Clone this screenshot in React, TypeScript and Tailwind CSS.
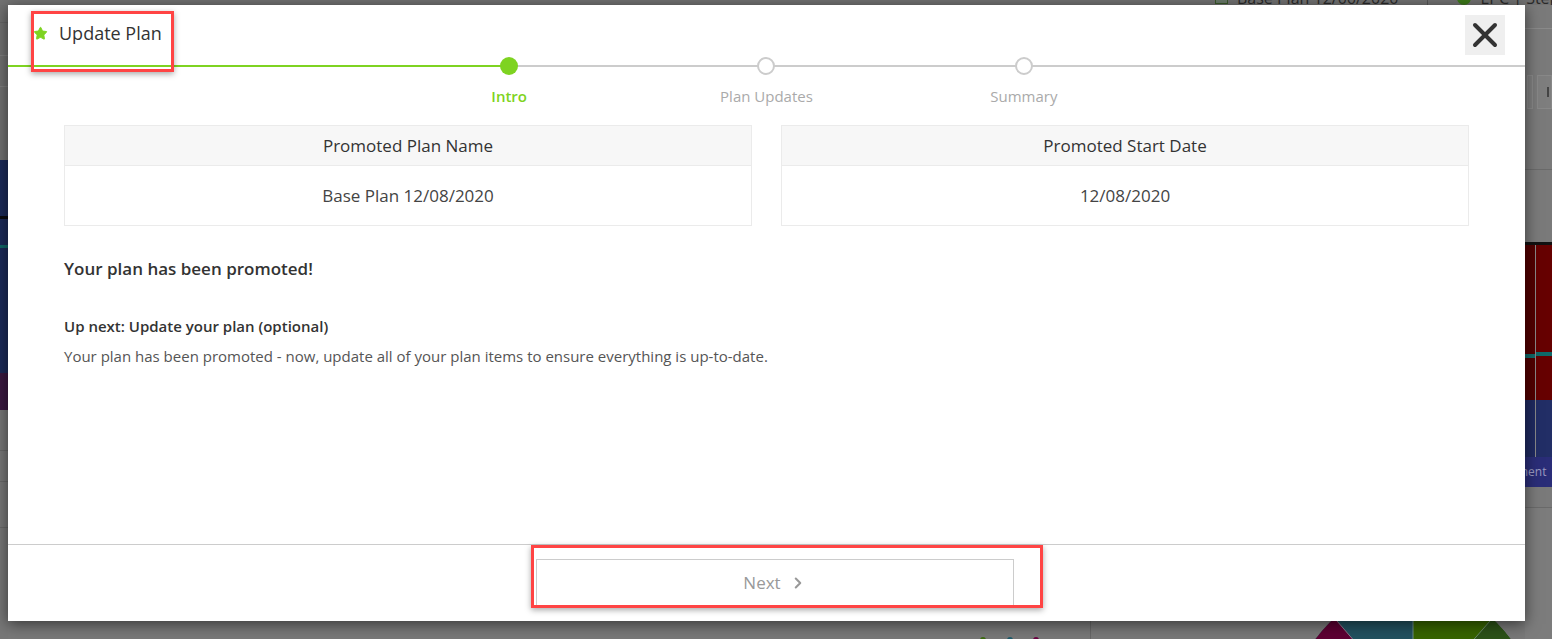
import { Star, ChevronRight } from "lucide-react";

function LeftStrip() {
  return (
    <div className="w-[8px] flex flex-col">
      <div className="h-[155px] bg-[#707070] flex flex-col">
        <div className="h-[17px]" />
        <div className="h-px bg-[#666]" />
        <div className="h-[32px]" />
        <div className="h-px bg-[#7e7e7e]" />
        <div className="h-[30px]" />
        <div className="h-px bg-[#7e7e7e]" />
      </div>
      <div className="h-[56px] bg-[#1b2a58]" />
      <div className="h-[3px] bg-[#0c0c10]" />
      <div className="h-[26px] bg-[#1b2a58]" />
      <div className="h-[3px] bg-[#0f6767]" />
      <div className="h-[125px] bg-[#1b2a58]" />
      <div className="h-[37px] bg-[#3a1840]" />
      <div className="flex-1 bg-[#777] flex flex-col">
        <div className="h-[40px]" />
        <div className="h-px bg-[#686868]" />
        <div className="h-[30px]" />
        <div className="h-px bg-[#686868]" />
        <div className="h-[45px]" />
        <div className="h-px bg-[#686868]" />
      </div>
    </div>
  );
}

function RightStrip() {
  return (
    <div className="w-[27px] flex flex-col">
      <div className="h-[23px] bg-[#7a7a7a]" />
      <div className="h-px bg-[#8a8a8a]" />
      <div className="h-[46px] bg-[#7a7a7a]" />
      <div className="h-[34px] bg-[#7a7a7a] flex gap-[4px] pl-[2px]">
        <div className="w-[6px] border border-[#888] bg-[#7e7e7e]" />
        <div className="flex-1 border border-[#888] bg-[#7e7e7e] flex items-center pl-[9px]">
          <div className="w-[2px] h-[10px] bg-[#444]" />
        </div>
      </div>
      <div className="h-[60px] bg-[#7a7a7a]" />
      <div className="h-px bg-[#6a6a6a]" />
      <div className="h-[72px] bg-[#7a7a7a]" />
      <div className="h-[3px] bg-[#111]" />
      <div className="h-[155px] flex">
        <div className="w-[10px] flex flex-col bg-[#520000]">
          <div className="h-[109px]" />
          <div className="h-[4px] bg-[#0f6a6a]" />
        </div>
        <div className="w-px bg-[#888]" />
        <div className="flex-1 flex flex-col bg-[#660000]">
          <div className="h-[107px]" />
          <div className="h-[4px] bg-[#0f6a6a]" />
        </div>
      </div>
      <div className="h-[57px] flex">
        <div className="w-[10px] bg-[#1f2a60]" />
        <div className="w-px bg-[#888]" />
        <div className="flex-1 bg-[#222e66]" />
      </div>
      <div className="h-[30px] bg-[#2a2d78] overflow-hidden flex items-center">
        <span className="text-[12px] text-[#9a9ac0] -ml-[8px] whitespace-nowrap">ment</span>
      </div>
      <div className="h-[20px] bg-[#7a7a7a]" />
      <div className="h-px bg-[#6a6a6a]" />
      <div className="flex-1 bg-[#7c7c7c]" />
    </div>
  );
}

function BottomStrip() {
  return (
    <div className="h-[18px] bg-[#787878] overflow-hidden">
      <svg width="1517" height="18" viewBox="0 0 1517 18">
        <defs>
          <clipPath id="pie">
            <circle cx="1405" cy="88" r="120" />
          </clipPath>
        </defs>
        <line x1="1082.5" y1="0" x2="1082.5" y2="18" stroke="#666" strokeWidth="1" />
        <circle cx="975" cy="19" r="3" fill="#3d6a10" />
        <circle cx="1002" cy="19" r="3" fill="#1d5a6a" />
        <circle cx="1028" cy="19" r="3" fill="#6a0040" />
        <g clipPath="url(#pie)">
          <rect x="1200" y="-40" width="400" height="200" fill="#22515f" />
          <polygon points="1405,88 1405,-200 1700,-200 1700,88" fill="#376400" />
          <polygon points="1405,88 1636,-176 1700,-176 1700,88" fill="#2c5218" />
          <polygon points="1405,88 1177,-176 1100,-176 1100,88" fill="#5e0033" />
          <line x1="1405" y1="88" x2="1405" y2="-40" stroke="#6a8a8a" strokeWidth="1" />
          <line x1="1405" y1="88" x2="1636" y2="-176" stroke="#6a8a6a" strokeWidth="1" />
          <line x1="1405" y1="88" x2="1177" y2="-176" stroke="#8a7a8a" strokeWidth="1" />
        </g>
      </svg>
    </div>
  );
}

function CloseIcon() {
  return (
    <svg width="26" height="26" viewBox="0 0 26 26">
      <line x1="3" y1="3" x2="23" y2="23" stroke="#333" strokeWidth="4" strokeLinecap="round" />
      <line x1="23" y1="3" x2="3" y2="23" stroke="#333" strokeWidth="4" strokeLinecap="round" />
    </svg>
  );
}

function Stepper() {
  const steps = [
    { label: "Intro", active: true },
    { label: "Plan Updates", active: false },
    { label: "Summary", active: false },
  ];
  return (
    <div className="relative h-[51px]">
      <div className="absolute left-0 right-0 top-[10px] h-[2px] bg-[#cccccc]" />
      <div className="absolute left-0 top-[10px] h-[2px] w-[501px] bg-[#7ed321]" />
      <div className="relative mx-auto w-[772px] grid grid-cols-3">
        {steps.map((s) => (
          <div key={s.label} className="flex flex-col items-center">
            {s.active ? (
              <div className="mt-[2px] w-[18px] h-[18px] rounded-full bg-[#7ed321]" />
            ) : (
              <div className="mt-[2px] w-[18px] h-[18px] rounded-full bg-white border-2 border-[#cccccc]" />
            )}
            <div
              className={
                s.active
                  ? "mt-[11px] leading-5 text-[15px] font-semibold text-[#7ed321]"
                  : "mt-[11px] leading-5 text-[15px] text-[#aaaaaa]"
              }
            >
              {s.label}
            </div>
          </div>
        ))}
      </div>
    </div>
  );
}

function InfoCard({ title, value }: { title: string; value: string }) {
  return (
    <div className="border border-[#ebebeb] flex flex-col">
      <div className="h-[40px] bg-[#f7f7f7] border-b border-[#ebebeb] flex items-center justify-center text-[17px] text-[#333]">
        {title}
      </div>
      <div className="h-[59px] flex items-center justify-center text-[17px] text-[#444]">
        {value}
      </div>
    </div>
  );
}

function Modal() {
  return (
    <div className="h-[616px] bg-white shadow-[0_3px_14px_rgba(0,0,0,0.55)] relative z-10 flex flex-col">
      <div className="h-[50px] flex items-start justify-between">
        <div className="flex items-center gap-[11px] pl-[25px] pt-[17px]">
          <Star size={15} fill="#7ed321" stroke="#7ed321" strokeWidth={1.5} />
          <span className="text-[18px] leading-[22px] text-[#333]">Update Plan</span>
        </div>
        <button className="mt-[10px] mr-[20px] w-[40px] h-[40px] bg-[#efefef] flex items-center justify-center">
          <CloseIcon />
        </button>
      </div>
      <Stepper />
      <div className="flex-1 px-[56px] pt-[19px]">
        <div className="grid grid-cols-2 gap-[29px]">
          <InfoCard title="Promoted Plan Name" value="Base Plan 12/08/2020" />
          <InfoCard title="Promoted Start Date" value="12/08/2020" />
        </div>
        <div className="mt-[31px] text-[17px] leading-6 font-semibold text-[#333]">
          Your plan has been promoted!
        </div>
        <div className="mt-[35px] text-[15px] leading-5 font-semibold text-[#333]">
          Up next: Update your plan (optional)
        </div>
        <div className="mt-[10px] text-[15px] leading-5 text-[#555]">
          Your plan has been promoted - now, update all of your plan items to ensure everything is up-to-date.
        </div>
      </div>
      <div className="h-[77px] border-t border-[#cccccc] pt-[14px] pl-[528px]">
        <button className="w-[478px] h-[47px] border border-[#cccccc] bg-white flex items-center justify-center gap-[8px] text-[17px] text-[#999]">
          <span>Next</span>
          <ChevronRight size={18} strokeWidth={2.75} color="#999" />
        </button>
      </div>
    </div>
  );
}

export default function App() {
  return (
    <div className="relative w-[1552px] h-[639px] overflow-hidden bg-[#777] flex flex-col font-['Open_Sans',sans-serif]">
      <div className="h-[5px] bg-[#727272] overflow-hidden flex">
        <div className="ml-[1215px] -mt-[10px] flex items-center gap-[9px] whitespace-nowrap">
          <div className="w-[13px] h-[13px] border border-[#3a5a2a] bg-[#6a7a6a]" />
          <span className="text-[16px] leading-[16px] text-[#2a2a2a]">Base Plan 12/06/2020</span>
          <div className="w-px h-[16px] bg-[#555] ml-[20px]" />
          <div className="ml-[20px] w-[14px] h-[14px] rounded-full bg-[#3d7a1a]" />
          <span className="text-[16px] leading-[16px] text-[#2a2a2a]">EPC | Stephenson</span>
        </div>
      </div>
      <div className="flex-1 flex">
        <LeftStrip />
        <div className="w-[1517px] flex flex-col">
          <Modal />
          <BottomStrip />
        </div>
        <RightStrip />
      </div>
      <div className="absolute left-[31px] top-[11px] w-[143px] h-[61px] border-[3px] border-[#ff4444] shadow-[0_2px_6px_rgba(0,0,0,0.35)] z-20" />
      <div className="absolute left-[531px] top-[545px] w-[512px] h-[63px] border-[3px] border-[#ff4444] shadow-[0_2px_6px_rgba(0,0,0,0.35)] z-20" />
    </div>
  );
}
